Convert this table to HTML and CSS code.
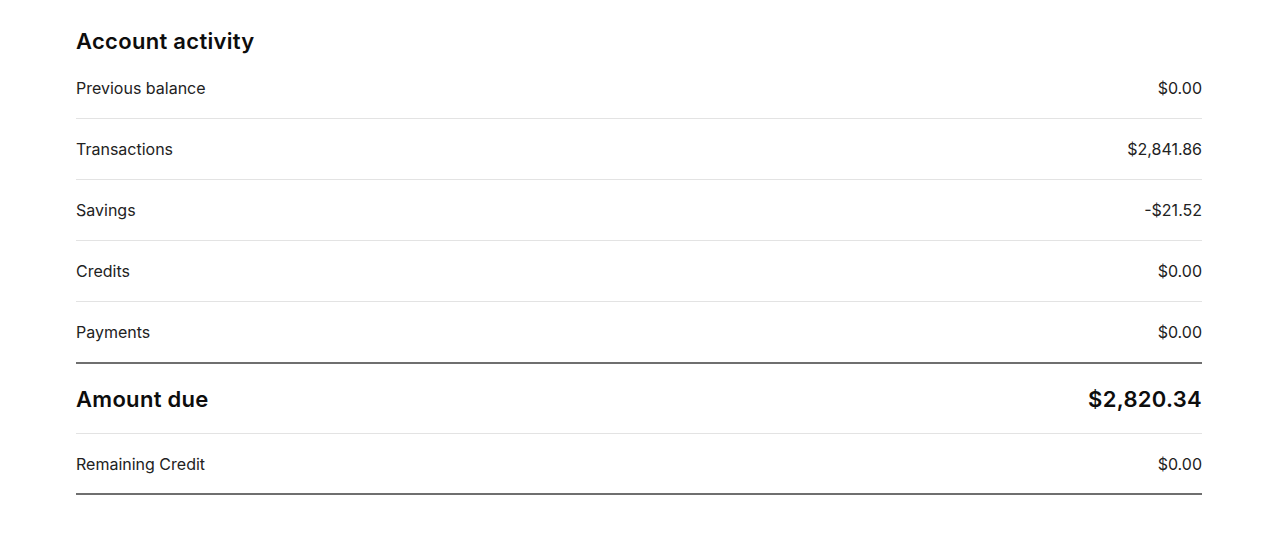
FILE: index.html
```html
<!DOCTYPE html>
<html lang="en">
<head>
<meta charset="utf-8">
<title>Account activity</title>
<link rel="stylesheet" href="styles.css">
</head>
<body>
<section class="activity">
  <h2 class="activity-title">Account activity</h2>
  <div class="rows">
    <div class="row"><span>Previous balance</span><span>$0.00</span></div>
    <div class="row"><span>Transactions</span><span>$2,841.86</span></div>
    <div class="row"><span>Savings</span><span>-$21.52</span></div>
    <div class="row"><span>Credits</span><span>$0.00</span></div>
    <div class="row row-last"><span>Payments</span><span>$0.00</span></div>
    <div class="row row-total"><span>Amount due</span><span>$2,820.34</span></div>
    <div class="row row-final"><span>Remaining Credit</span><span>$0.00</span></div>
  </div>
</section>
</body>
</html>
```
FILE: styles.css
```css
html, body {
  margin: 0;
  padding: 0;
  background: #ffffff;
}
body {
  font-family: Inter, "Noto Sans", "Liberation Sans", sans-serif;
  color: #222222;
}
.activity {
  padding: 27px 78px 0 76px;
}
.activity-title {
  margin: 0 0 3px 0;
  font-size: 22px;
  line-height: 28px;
  font-weight: 600;
  letter-spacing: 0.3px;
  color: #0d0d0d;
}
.rows {
  display: flex;
  flex-direction: column;
}
.row {
  display: flex;
  justify-content: space-between;
  align-items: center;
  height: 60px;
  font-size: 16px;
  letter-spacing: 0;
  border-bottom: 1px solid #e3e3e3;
}
.row-last {
  height: 60px;
  border-bottom: 2px solid #6f6f6f;
}
.row-total {
  height: 69px;
  font-size: 22px;
  font-weight: 600;
  letter-spacing: 0.3px;
  color: #0d0d0d;
}
.row-final {
  height: 59px;
  border-bottom: 2px solid #6f6f6f;
}
```
